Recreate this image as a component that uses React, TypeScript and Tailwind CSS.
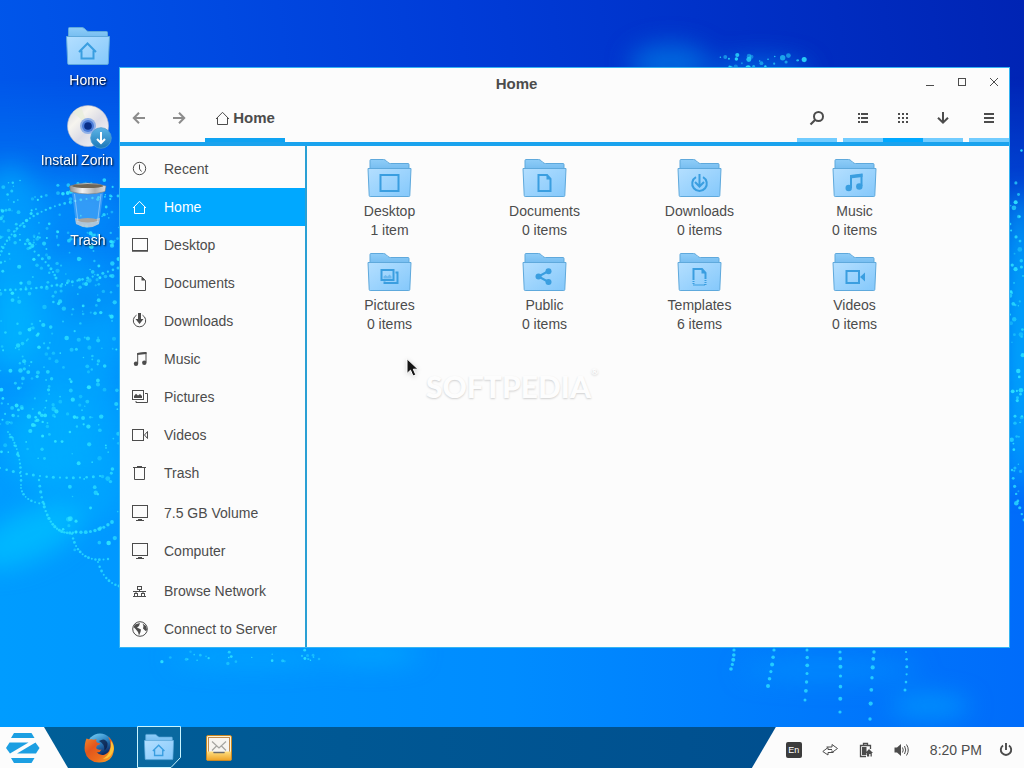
import type { ReactNode } from 'react';

/* ---------- wallpaper ---------- */

type Dot = { x: number; y: number; r: number; o: number };

function seeded(seed: number) {
  let s = seed * 7919;
  return () => {
    s = (s * 16807) % 2147483647;
    return s / 2147483647;
  };
}

function scatter(seed: number, n: number, x: number, y: number, w: number, h: number, max: number): Dot[] {
  const rnd = seeded(seed);
  return Array.from({ length: n }, () => ({
    x: x + rnd() * w,
    y: y + rnd() * h,
    r: 0.7 + rnd() * max,
    o: 0.35 + rnd() * 0.6,
  }));
}

function strand(p: [number, number][], n: number, r: number): Dot[] {
  const [a, b, c] = p;
  return Array.from({ length: n }, (_, i) => {
    const t = i / (n - 1);
    const u = 1 - t;
    return {
      x: u * u * a[0] + 2 * u * t * b[0] + t * t * c[0],
      y: u * u * a[1] + 2 * u * t * b[1] + t * t * c[1],
      r: r + (i % 3) * 0.2,
      o: 0.75,
    };
  });
}

const dots: Dot[] = [
  ...scatter(11, 240, 0, 235, 119, 190, 1.6),
  ...scatter(29, 90, 0, 180, 119, 70, 1.3),
  ...scatter(83, 40, 60, 420, 59, 130, 1.8),
  ...scatter(59, 40, 0, 400, 60, 60, 1.5),
  ...scatter(61, 60, 1010, 150, 14, 360, 1.7),
  ...scatter(47, 26, 716, 54, 90, 14, 2),
  ...scatter(97, 30, 160, 650, 160, 14, 1),
  ...strand([[0, 255], [20, 200], [118, 196]], 30, 1),
  ...strand([[0, 290], [60, 290], [118, 268]], 24, 1.1),
  ...strand([[20, 240], [50, 262], [56, 278]], 12, 1.1),
  ...strand([[8, 432], [22, 450], [21, 485]], 16, 0.9),
  ...strand([[21, 488], [24, 502], [44, 504]], 9, 0.9),
  ...strand([[39, 480], [46, 540], [76, 532]], 20, 1.2),
  ...strand([[76, 532], [96, 534], [112, 522]], 9, 1.5),
  ...strand([[72, 534], [78, 564], [108, 559]], 14, 1.0),
  ...strand([[98, 562], [104, 582], [119, 586]], 9, 1.0),
  ...strand([[0, 468], [50, 482], [100, 476]], 16, 1.1),
  ...strand([[1012, 470], [1016, 500], [1024, 520]], 8, 1.2),
  ...strand([[734, 650], [734, 660], [731, 669]], 5, 1.6),
  ...strand([[774, 650], [772, 668], [768, 686]], 6, 1.6),
  ...strand([[807, 650], [808, 672], [805, 700]], 7, 1.5),
  ...strand([[840, 652], [841, 670], [840, 712]], 7, 1.6),
  ...strand([[874, 652], [872, 670], [870, 719]], 7, 1.7),
  ...strand([[906, 652], [908, 670], [905, 690]], 6, 1.1),
];

function Wallpaper() {
  return (
    <svg aria-hidden="true" className="absolute inset-0 h-full w-full" viewBox="0 0 1024 768" preserveAspectRatio="none">
      <defs>
        <linearGradient id="top" x1="0" y1="0.1" x2="1" y2="0">
          <stop offset="0" stopColor="#0056ea" />
          <stop offset="0.45" stopColor="#003cd8" />
          <stop offset="1" stopColor="#0024b4" />
        </linearGradient>
        <linearGradient id="low" x1="0" y1="0" x2="1" y2="0">
          <stop offset="0" stopColor="#009cff" />
          <stop offset="0.5" stopColor="#008cff" />
          <stop offset="1" stopColor="#006cfa" />
        </linearGradient>
        <linearGradient id="fade" x1="0" y1="0" x2="0" y2="1">
          <stop offset="0.1" stopColor="#fff" stopOpacity="0" />
          <stop offset="0.34" stopColor="#fff" stopOpacity="0.75" />
          <stop offset="0.6" stopColor="#fff" />
        </linearGradient>
        <mask id="lowmask">
          <rect width="1024" height="768" fill="url(#fade)" />
        </mask>
        <filter id="soft" x="-50%" y="-50%" width="200%" height="200%">
          <feGaussianBlur stdDeviation="12" />
        </filter>
      </defs>
      <rect width="1024" height="768" fill="url(#top)" />
      <rect width="1024" height="768" fill="url(#low)" mask="url(#lowmask)" />
      <g filter="url(#soft)">
        <ellipse cx="10" cy="235" rx="34" ry="70" fill="#00b4ff" opacity="0.6" />
        <ellipse cx="60" cy="210" rx="60" ry="30" fill="#0098ff" opacity="0.5" />
        <ellipse cx="70" cy="330" rx="55" ry="70" fill="#00a8ff" opacity="0.7" />
        <ellipse cx="10" cy="330" rx="26" ry="40" fill="#00c0ff" opacity="0.6" />
        <ellipse cx="85" cy="300" rx="26" ry="20" fill="#0078ee" opacity="0.4" />
        <ellipse cx="50" cy="440" rx="44" ry="50" fill="#00bcff" opacity="0.55" />
        <ellipse cx="100" cy="450" rx="26" ry="70" fill="#00acff" opacity="0.6" />
        <ellipse cx="30" cy="535" rx="60" ry="24" fill="#00c4ff" opacity="0.7" transform="rotate(-25 30 535)" />
        <ellipse cx="670" cy="64" rx="40" ry="20" fill="#0074e4" opacity="0.8" />
        <ellipse cx="760" cy="72" rx="50" ry="14" fill="#0078e8" opacity="0.7" />
        <ellipse cx="1020" cy="340" rx="14" ry="150" fill="#00b8ff" opacity="0.9" />
        <ellipse cx="250" cy="658" rx="80" ry="8" fill="#00b4ff" opacity="0.6" />
        <ellipse cx="370" cy="654" rx="50" ry="10" fill="#00b4ff" opacity="0.6" />
        <ellipse cx="930" cy="706" rx="40" ry="10" fill="#00a8ff" opacity="0.7" />
        <ellipse cx="830" cy="670" rx="90" ry="10" fill="#0098ff" opacity="0.6" />
      </g>
      {dots.map((d, i) => (
        <circle key={i} cx={d.x} cy={d.y} r={d.r} fill="#2fe6ff" opacity={d.o} />
      ))}
    </svg>
  );
}

/* ---------- folders ---------- */

function Gradients() {
  return (
    <svg aria-hidden="true" className="absolute size-0">
      <defs>
        <linearGradient id="front" x1="0" y1="0" x2="1" y2="1">
          <stop offset="0" stopColor="#b4dfff" />
          <stop offset="1" stopColor="#84c8fb" />
        </linearGradient>
        <linearGradient id="back" x1="0" y1="0" x2="0" y2="1">
          <stop offset="0" stopColor="#8fcdf8" />
          <stop offset="1" stopColor="#76bdf0" />
        </linearGradient>
      </defs>
    </svg>
  );
}

function Folder({ children, className }: { children: ReactNode; className: string }) {
  return (
    <svg aria-hidden="true" viewBox="0 0 44 40" className={className}>
      <path d="M2.5 11V2.5Q2.5 1.5 3.5 1.5H16Q17.500 1.500 19 3L20.500 4.500Q21.500 5.500 23 5.500H40.500Q41.500 5.500 41.500 6.500V11Z" fill="url(#back)" stroke="#5fa9dc" />
      <path d="M.5 10.500H43.500L42.300 37.500Q42.300 38.500 41.300 38.500H2.700Q1.700 38.500 1.700 37.500Z" fill="url(#front)" stroke="#5fa9dc" />
      <g fill="none" stroke="#3a9ee0" strokeWidth="2">
        {children}
      </g>
    </svg>
  );
}

const glyphs: Record<string, ReactNode> = {
  Home: <path d="M13 26L21.500 17.500L30 26M15.500 24.500V32.500H27.500V24.500" />,
  Desktop: <rect x="13" y="17" width="18" height="16" />,
  Documents: (
    <>
      <path d="M16 17H24.500L28 21V33H16Z" />
      <path d="M24 17V21.500H28.500Z" fill="#3a9ee0" stroke="none" />
    </>
  ),
  Downloads: (
    <>
      <path d="M18.500 19.200A7.300 7.300 0 1 0 25.500 19.200" />
      <path d="M22 16V28M17.500 24L22 28.500L26.500 24" />
    </>
  ),
  Music: (
    <>
      <path d="M18.500 30V18.500L29 17V28" />
      <path d="M17.500 17L30 15.500V19L17.500 20.500Z" fill="#3a9ee0" stroke="none" />
      <circle cx="16.200" cy="30" r="3.200" fill="#3a9ee0" stroke="none" />
      <circle cx="26.800" cy="28.500" r="3.200" fill="#3a9ee0" stroke="none" />
    </>
  ),
  Pictures: (
    <>
      <rect x="14" y="18" width="12" height="10" />
      <path d="M28 20.500H30V31H17V29.500" />
      <path d="M16 26.500V24.500L18 23L20 24.500L22 22.500L24 24.500V26.500Z" fill="#6cb8ee" stroke="none" />
    </>
  ),
  Public: (
    <>
      <path d="M26 19L16 24.500L26 30" />
      <circle cx="26" cy="19.200" r="3" fill="#3a9ee0" stroke="none" />
      <circle cx="16" cy="24.500" r="3" fill="#3a9ee0" stroke="none" />
      <circle cx="26" cy="30" r="3" fill="#3a9ee0" stroke="none" />
    </>
  ),
  Templates: (
    <>
      <path d="M16 27V17H24.500L28 21V27" />
      <path d="M24 17V21.500H28.500Z" fill="#3a9ee0" stroke="none" />
      <path d="M16 27V33H28V27" strokeDasharray="1 1" />
    </>
  ),
  Videos: (
    <>
      <rect x="14" y="19" width="12.500" height="12" />
      <path d="M27.500 25L32.500 20.500V29.500Z" fill="#3a9ee0" stroke="none" />
    </>
  ),
};

const files = [
  ['Desktop', '1 item'],
  ['Documents', '0 items'],
  ['Downloads', '0 items'],
  ['Music', '0 items'],
  ['Pictures', '0 items'],
  ['Public', '0 items'],
  ['Templates', '6 items'],
  ['Videos', '0 items'],
];

/* ---------- line icons ---------- */

function Icon({ children }: { children: ReactNode }) {
  return (
    <svg aria-hidden="true" viewBox="0 0 16 16" className="size-4 shrink-0" fill="none" stroke="currentColor">
      {children}
    </svg>
  );
}

const house = <path d="M1 9L7.500 2.300L14 9M2.500 7.500V14.500H12.500V7.500" />;
const monitor = (
  <>
    <rect x=".5" y=".5" width="15" height="12" />
    <path d="M6 14.500H10M4 15.500H12" />
  </>
);

const symbols: Record<string, ReactNode> = {
  Recent: (
    <>
      <circle cx="7.500" cy="7.500" r="6.200" />
      <path d="M7.500 3.500V8L9.500 10.500" />
    </>
  ),
  Home: house,
  Desktop: (
    <>
      <rect x=".5" y="1.500" width="15" height="12" />
      <path d="M0 14H16" strokeWidth="1.500" />
    </>
  ),
  Documents: (
    <>
      <path d="M2.500 1.500H9.500L13.500 5.500V15.500H2.500Z" />
      <path d="M9.500 1.500V5.500H13.500Z" fill="currentColor" stroke="none" />
    </>
  ),
  Downloads: (
    <>
      <path d="M4.500 2.200A6.200 6.200 0 1 0 10.500 2.200" />
      <path d="M6 0H9V6H11.500L7.500 11L3.500 6H6Z" fill="currentColor" stroke="none" />
    </>
  ),
  Music: (
    <>
      <path d="M5.700 12.500V2.500L14 1.500V11.500" />
      <path d="M5.200 2L14.500 1V3L5.200 4Z" fill="currentColor" stroke="none" />
      <circle cx="4" cy="12.800" r="2.200" fill="currentColor" stroke="none" />
      <circle cx="12.300" cy="11.800" r="2.200" fill="currentColor" stroke="none" />
    </>
  ),
  Pictures: (
    <>
      <rect x=".5" y="1.500" width="11" height="9" />
      <path d="M13 4.500H15.500V13.500H4V12" />
      <path d="M2 9V7L4 4.800L6 6.500L8 5L10 7V9Z" fill="currentColor" stroke="none" />
    </>
  ),
  Videos: (
    <>
      <rect x=".5" y="2.500" width="11" height="11" />
      <path d="M12.500 8L15.500 4.500V11.500Z" />
    </>
  ),
  Trash: (
    <>
      <path d="M2.500 3V14.500H12.500V3M1 2.500H14" />
      <path d="M5 1.500H10" />
    </>
  ),
  '7.5 GB Volume': monitor,
  Computer: monitor,
  'Browse Network': (
    <>
      <rect x="5.500" y="3.500" width="4" height="3" />
      <rect x="2.500" y="10.500" width="3" height="3" />
      <rect x="9.500" y="10.500" width="3" height="3" />
      <path d="M7.500 7V8.500M4 10V8.500H11V10M1 13.500H14M1 8.500H14" />
    </>
  ),
  'Connect to Server': (
    <>
      <circle cx="8" cy="8" r="7.300" />
      <path d="M3 3.500L8 2L7 5L5 6.500L9 8.500L8.500 11L7 14.500L6 11L3.500 8L1.500 6Z" fill="currentColor" stroke="none" />
      <path d="M10.500 2.500L14 5L15 9L13.500 10L11 7.500L11.500 5Z" fill="currentColor" stroke="none" />
    </>
  ),
};

const placeGroups = [
  ['Recent', 'Home', 'Desktop', 'Documents', 'Downloads', 'Music', 'Pictures', 'Videos', 'Trash'],
  ['7.5 GB Volume', 'Computer'],
  ['Browse Network', 'Connect to Server'],
];

/* ---------- toolbar ---------- */

const tool = 'flex h-full w-10 items-center justify-center border-b-4 pb-[2px]';
const idle = 'border-[#72ccff]';
const plain = 'border-transparent';

function ToolButton({ label, tone, children }: { label: string; tone: string; children: ReactNode }) {
  return (
    <button type="button" aria-label={label} className={`${tool} ${tone}`}>
      <Icon>{children}</Icon>
    </button>
  );
}

function Toolbar() {
  return (
    <div className="flex h-[42px] items-stretch">
      <div className="flex text-[#8c8c8c]">
        <ToolButton label="Back" tone={plain}>
          <path d="M13 8H2M7 2.800L1.800 8L7 13.200" strokeWidth="2" />
        </ToolButton>
        <ToolButton label="Forward" tone={plain}>
          <path d="M1 8H12M7 2.800L12.200 8L7 13.200" strokeWidth="2" />
        </ToolButton>
      </div>
      <a href="#home" className="ml-[5px] flex w-20 items-center justify-center gap-[2px] border-b-4 border-[#0fa3f2] pb-[2px] text-[15px] font-bold">
        <Icon>{house}</Icon>
        Home
      </a>
      <div className="ml-auto flex gap-[6px]">
        <ToolButton label="Search" tone={idle}>
          <circle cx="9.500" cy="6.500" r="4.500" strokeWidth="2" />
          <path d="M6.500 9.500L1.500 14.500" strokeWidth="2.200" />
        </ToolButton>
        <div className="flex">
          <ToolButton label="List view" tone={idle}>
            <path d="M3 4H5M3 8H5M3 12H5M6 4H13M6 8H13M6 12H13" strokeWidth="2" />
          </ToolButton>
          <ToolButton label="Icon view" tone="border-[#00a8ff]">
            <path d="M3 4H5M7 4H9M11 4H13M3 8H5M7 8H9M11 8H13M3 12H5M7 12H9M11 12H13" strokeWidth="2" />
          </ToolButton>
          <ToolButton label="Sort" tone={idle}>
            <path d="M8 2V12.500M3 7.700L8 12.700L13 7.700" strokeWidth="2" />
          </ToolButton>
        </div>
        <ToolButton label="Menu" tone={idle}>
          <path d="M3 4H13M3 8H13M3 12H13" strokeWidth="2" />
        </ToolButton>
      </div>
    </div>
  );
}

function FileWindow() {
  return (
    <section aria-label="Home" className="relative mt-[67px] mr-[14px] mb-[79px] flex min-w-0 flex-1 flex-col border border-[#35b4f2] bg-[#fcfcfc]">
      <header className="flex h-8 items-center">
        <h1 className="flex-1 text-center text-[15px] font-bold">Home</h1>
        <button type="button" aria-label="Minimise" className="flex w-8 justify-center">
          <Icon><path d="M5 9.500H13" /></Icon>
        </button>
        <button type="button" aria-label="Maximise" className="flex w-8 justify-center">
          <Icon><rect x="5.500" y="2.500" width="7" height="7" /></Icon>
        </button>
        <button type="button" aria-label="Close" className="flex w-8 justify-center">
          <Icon><path d="M5 2L13 10M13 2L5 10" /></Icon>
        </button>
      </header>
      <Toolbar />
      <div className="h-1 bg-[#1aa3ee]" />
      <div className="flex min-h-0 flex-1 overflow-hidden">
        <nav aria-label="Places" className="-mb-px flex w-[187px] shrink-0 flex-col gap-[2px] border-r-2 border-[#2aa0d4] pt-1">
          {placeGroups.map((group) => (
            <ul key={group[0]}>
              {group.map((name) => (
                <li key={name}>
                  <a
                    href="#place"
                    className={
                      name === 'Home'
                        ? 'flex h-[38px] items-center gap-4 bg-[#00a8ff] pl-3 text-white'
                        : 'flex h-[38px] items-center gap-4 pl-3'
                    }
                  >
                    <Icon>{symbols[name]}</Icon>
                    {name}
                  </a>
                </li>
              ))}
            </ul>
          ))}
        </nav>
        <ul className="grid flex-1 grid-cols-[repeat(auto-fill,155px)] content-start gap-y-3 pt-3 pl-[5px]">
          {files.map(([name, count]) => (
            <li key={name} className="flex flex-col items-center text-center leading-[19px]">
              <Folder className="mb-1 h-10 w-[45px]">{glyphs[name]}</Folder>
              <span>{name}</span>
              <span>{count}</span>
            </li>
          ))}
        </ul>
      </div>
      <p className="absolute top-[300px] left-[306px] flex font-['Lato'] text-[30px] leading-9 font-black text-[#fdfdfd] [text-shadow:0_1px_2px_#d0d0d0]">
        SOFTPEDIA<sup className="text-[9px] leading-4">®</sup>
      </p>
      <svg aria-hidden="true" viewBox="0 0 14 20" className="absolute top-[290px] left-[286px] h-5 w-3.5 drop-shadow-sm">
        <path d="M1 .8V15.500L4.500 12.200L7 18L9.800 16.800L7.300 11.200H12Z" fill="#151515" stroke="#fff" />
      </svg>
    </section>
  );
}

/* ---------- desktop ---------- */

function Disc() {
  return (
    <svg aria-hidden="true" viewBox="0 0 48 48" className="size-12">
      <defs>
        <linearGradient id="disc" x1="0" y1="0" x2="1" y2="1">
          <stop offset="0" stopColor="#d2d2dc" />
          <stop offset="0.3" stopColor="#f6f4ee" />
          <stop offset="0.55" stopColor="#dcdce6" />
          <stop offset="1" stopColor="#fafafa" />
        </linearGradient>
        <linearGradient id="badge" x1="0" y1="0" x2="0" y2="1">
          <stop offset="0" stopColor="#5cb4e6" />
          <stop offset="1" stopColor="#1c78b8" />
        </linearGradient>
      </defs>
      <circle cx="24" cy="24" r="20.500" fill="url(#disc)" stroke="#b8bccb" strokeWidth=".6" />
      <path d="M24 24L9 10A20 20 0 0 1 17 5Z" fill="#e9eedb" opacity=".8" />
      <circle cx="24" cy="24" r="8" fill="#8fb0e8" />
      <circle cx="24" cy="24" r="6" fill="#4a7cd8" />
      <circle cx="24" cy="24" r="3.800" fill="#082f88" />
      <circle cx="37" cy="36" r="10.300" fill="url(#badge)" stroke="#4a9cd0" strokeWidth=".8" />
      <path d="M37 30V40M33 37L37 41L41 37" fill="none" stroke="#fff" strokeWidth="2" />
    </svg>
  );
}

function Bin() {
  return (
    <svg aria-hidden="true" viewBox="0 0 48 48" className="size-12">
      <defs>
        <linearGradient id="rim" x1="0" y1="0" x2="1" y2="0">
          <stop offset="0" stopColor="#8c8c8c" />
          <stop offset="0.35" stopColor="#f2f2f2" />
          <stop offset="0.7" stopColor="#b0b0b0" />
          <stop offset="1" stopColor="#dadada" />
        </linearGradient>
      </defs>
      <path d="M7.500 7L12 42Q24 48 35 42L40 7Z" fill="#9cc8f4" opacity=".32" />
      <path d="M11 36L12 42Q24 49 35 42L36 36Q24 40 11 36Z" fill="#c4ccd4" opacity=".85" />
      <path d="M11.500 38Q24 34 35.500 38Q24 43 11.500 38Z" fill="#a8a49e" />
      <path d="M10.500 12L14 40M37 12L33.500 40" stroke="#d8ecff" opacity=".45" />
      <path d="M5.500 4Q24 -2 42 4L41 9.500Q24 14.500 6.500 9.500Z" fill="url(#rim)" stroke="#777" strokeWidth=".5" />
      <ellipse cx="23.700" cy="4" rx="15.500" ry="2" fill="#6f6656" />
    </svg>
  );
}

function DesktopItem({ name, children }: { name: string; children: ReactNode }) {
  return (
    <li>
      <a href="#open" className="flex w-[50px] flex-col items-center">
        <span className="flex h-12 items-center">{children}</span>
        <span className={name.length > 8 ? 'self-end whitespace-nowrap leading-5' : 'leading-5'}>{name}</span>
      </a>
    </li>
  );
}

function DesktopIcons() {
  return (
    <ul className="relative flex w-[119px] shrink-0 flex-col items-end gap-3 pt-[22px] pr-[6px] text-white [text-shadow:1px_1px_2px_#000]">
      <DesktopItem name="Home">
        <Folder className="h-10 w-11">{glyphs.Home}</Folder>
      </DesktopItem>
      <DesktopItem name="Install Zorin"><Disc /></DesktopItem>
      <DesktopItem name="Trash"><Bin /></DesktopItem>
    </ul>
  );
}

/* ---------- panel ---------- */

function Firefox() {
  return (
    <svg aria-hidden="true" viewBox="0 0 32 32" className="size-8">
      <defs>
        <linearGradient id="fox" x1="0" y1="0" x2="1" y2="1">
          <stop offset="0" stopColor="#f08a2c" />
          <stop offset="0.35" stopColor="#e2561c" />
          <stop offset="0.65" stopColor="#ee6c1c" />
          <stop offset="1" stopColor="#ffb02c" />
        </linearGradient>
        <linearGradient id="globe" x1="0.2" y1="0" x2="0.7" y2="1">
          <stop offset="0" stopColor="#74ccf4" />
          <stop offset="0.4" stopColor="#2c84c4" />
          <stop offset="0.8" stopColor="#0c2c68" />
        </linearGradient>
      </defs>
      <circle cx="17" cy="14.500" r="13" fill="url(#globe)" />
      <path d="M3.500 6.500L6.500 7.500Q9 6.800 11 7.800L13.500 7Q12.500 9 14 10.500L17.500 11.500Q16.500 13 14 13.500L13 16Q14.500 18.500 18.500 17.500Q17 21 13.500 20Q17 24.500 22 22.500Q27.500 20 27.500 13Q27.500 8 25 4.500Q31 9 31 17Q30 30.500 16 30.500Q4 30 1.800 19Q1 12 3.500 6.500Z" fill="url(#fox)" />
      <path d="M16 9Q22 5 24.500 11Q25 16 21.500 18.500Q22 12 16 9Z" fill="#08163c" opacity=".7" />
      <path d="M28 9Q29 22 20 27Q29 26.500 30.800 17Q30.800 12 28 9Z" fill="#ffd03c" opacity=".85" />
    </svg>
  );
}

function Mail() {
  return (
    <svg aria-hidden="true" viewBox="0 0 28 28" className="size-7">
      <defs>
        <linearGradient id="tray" x1="0" y1="0" x2="0" y2="1">
          <stop offset="0" stopColor="#ffdf80" />
          <stop offset="1" stopColor="#eea62c" />
        </linearGradient>
      </defs>
      <rect x="1.500" y="1.500" width="25" height="25" rx="1.500" fill="#fff0cc" stroke="#c98824" />
      <rect x="3.500" y="3.500" width="21" height="15" fill="#f6f4f0" stroke="#c08c50" />
      <path d="M7 7.500L14 14L21 7.500M7 16.500L11.500 12M21 16.500L16.500 12" fill="none" stroke="#a4a4a0" strokeWidth="1.200" />
      <path d="M2 17.500H8.500V19H19.500V17.500H26V26H2Z" fill="url(#tray)" />
      <path d="M8.500 18.500H19.500" stroke="#6c6c6c" strokeWidth="1.500" />
    </svg>
  );
}

function Taskbar() {
  return (
    <footer className="relative flex h-[41px] items-stretch bg-linear-to-r from-[#005f98] to-[#004a8c] text-[#4c4c4c]">
      <button type="button" aria-label="Zorin menu" className="flex w-[68px] items-center bg-[#fcfcfc] pl-[5px] [clip-path:polygon(0_0,44px_0,100%_100%,0_100%)]">
        <svg aria-hidden="true" viewBox="0 0 36 32" className="h-8 w-9" fill="#1c9fe2">
          <path d="M9 1H26.500L29.500 6H6Z" />
          <path d="M9 31H26.500L29.500 26H6Z" />
          <path d="M4.500 10.500H23.500L5 21.500L1 16Z" />
          <path d="M31 21.500H12L30.500 10.500L34.500 16Z" />
        </svg>
      </button>
      <div className="ml-[9px] flex gap-4">
        <button type="button" aria-label="Firefox" className="flex w-11 items-center justify-center"><Firefox /></button>
        <button type="button" aria-label="Files" className="relative -mt-px flex w-11 items-center justify-center">
          <svg aria-hidden="true" viewBox="0 0 44 42" className="absolute inset-0 h-full w-full">
            <path d="M.5 .5H43.500V31.500L34 41.500H.5Z" fill="#0a69a0" stroke="#c8f4ff" />
          </svg>
          <Folder className="relative h-7 w-[30px]">{glyphs.Home}</Folder>
        </button>
        <button type="button" aria-label="Mail" className="flex w-11 items-center justify-center"><Mail /></button>
      </div>
      <div className="ml-auto flex items-center gap-4 bg-[#fcfcfc] pt-1 pr-[10px] pl-[34px] [clip-path:polygon(24px_0,100%_0,100%_100%,0_100%)]">
        <div className="flex items-center gap-5">
          <span className="flex size-4 items-center justify-center rounded-[2px] bg-[#3c3c3c] text-[9px] text-white">En</span>
          <Icon>
            <path d="M4.500 5H10V2.500L15.500 6.500L10 10.500V8.500M11.500 10.500H6V13L.8 9.500L6 5.500V7.500H10" />
          </Icon>
          <Icon>
            <path d="M8 14.500H2.500V3.500H12.500V7M5.500 3V1.500H9.500V3" strokeWidth="1.300" />
            <path d="M4 5H8.500V13H4ZM11 7L15 11H13.800V14.500H12.500V12H11.200V14.500H9V11H7.500Z" fill="currentColor" stroke="none" />
          </Icon>
          <Icon>
            <path d="M.5 5.500H3L7 2V14L3 10.500H.5Z" fill="currentColor" stroke="none" />
            <path d="M8.500 5.500Q10 8 8.500 10.500M10.500 4Q13 8 10.500 12M12.500 2.500Q16 8 12.500 13.500" />
          </Icon>
          <time className="whitespace-nowrap">8:20 PM</time>
        </div>
        <button type="button" aria-label="Power">
          <Icon>
            <path d="M5 3.500A5.200 5.200 0 1 0 11 3.500M8 1V8" strokeWidth="1.900" />
          </Icon>
        </button>
      </div>
    </footer>
  );
}

export default function App() {
  return (
    <div className="relative flex min-h-screen flex-col overflow-hidden bg-[#0088ff] font-['Liberation_Sans',Arial,sans-serif] text-[14px] leading-5 text-[#4c4c4c]">
      <Wallpaper />
      <Gradients />
      <main className="relative flex flex-1">
        <DesktopIcons />
        <FileWindow />
      </main>
      <Taskbar />
    </div>
  );
}
